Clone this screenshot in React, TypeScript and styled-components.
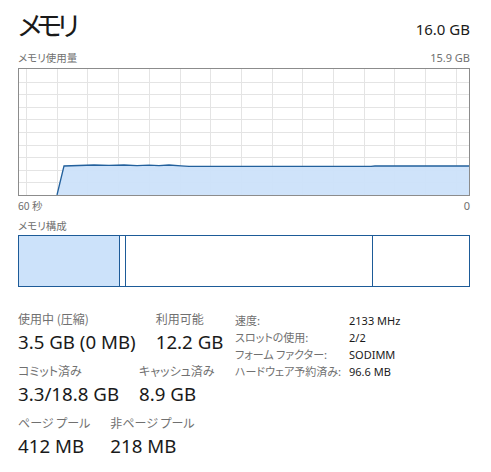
import React from 'react';
import styled, { createGlobalStyle } from 'styled-components';

const GlobalStyle = createGlobalStyle`
  html, body {
    margin: 0;
    padding: 0;
    background: #ffffff;
  }
  body {
    font-family: "Noto Sans", "Noto Sans CJK JP", sans-serif;
    color: #1a1a1a;
  }
`;

const Panel = styled.div`
  width: 491px;
  height: 472px;
  box-sizing: border-box;
  padding: 3px 21px 0 18px;
  overflow: hidden;
`;

const Header = styled.div`
  display: flex;
  justify-content: space-between;
  align-items: flex-end;
  height: 42px;
`;

const Title = styled.div`
  font-family: "Noto Sans CJK JP", sans-serif;
  font-feature-settings: "palt";
  font-size: 27px;
  letter-spacing: -5px;
  line-height: 40px;
`;

const Total = styled.div`
  font-size: 15px;
  line-height: 22px;
  margin-bottom: 5px;
`;

const CaptionRow = styled.div<{ $top?: number }>`
  display: flex;
  justify-content: space-between;
  align-items: center;
  height: 16px;
  margin-top: ${p => p.$top ?? 0}px;
  font-size: 11px;
  color: #707070;
`;

const Caption = styled.span`
  font-family: "Noto Sans CJK JP", sans-serif;
  font-feature-settings: "palt";
  font-size: 10.5px;
`;

const Graph = styled.div`
  width: 452px;
  height: 128px;
  box-sizing: border-box;
  border: 1px solid #8c8c8c;
  margin-top: 3px;
  svg { display: block; }
`;

const Composition = styled.div`
  display: flex;
  width: 452px;
  height: 52px;
  box-sizing: border-box;
  border: 1px solid #1d5b98;
  margin-top: 2px;
`;

const Segment = styled.div<{ $w: number; $fill?: boolean; $last?: boolean }>`
  width: ${p => p.$w}px;
  flex: ${p => (p.$last ? 1 : 'none')};
  background: ${p => (p.$fill ? '#cce2fa' : '#ffffff')};
  border-right: ${p => (p.$last ? 'none' : '1px solid #1d5b98')};
`;

const Stats = styled.div`
  display: flex;
  margin-top: 23px;
`;

const Left = styled.div`
  display: flex;
  flex-direction: column;
  width: 217px;
`;

const StatRow = styled.div`
  display: flex;
  gap: 20px;
  margin-bottom: 7px;
`;

const Stat = styled.div`
  display: flex;
  flex-direction: column;
`;

const StatLabel = styled.div`
  font-family: "Noto Sans CJK JP", sans-serif;
  font-feature-settings: "palt";
  font-size: 12px;
  line-height: 18px;
  color: #707070;
`;

const StatValue = styled.div`
  font-size: 18.7px;
  line-height: 26px;
  margin-top: 1px;
  color: #1a1a1a;
`;

const Details = styled.div`
  display: grid;
  grid-template-columns: 114px auto;
  grid-auto-rows: 17px;
  margin-top: 2px;
  font-size: 11px;
  line-height: 17px;
`;

const DetailLabel = styled.div`
  font-family: "Noto Sans CJK JP", sans-serif;
  font-feature-settings: "palt";
  color: #707070;
`;

const DetailValue = styled.div`
  color: #1a1a1a;
`;

const W = 450;
const H = 126;

const usage: [number, number][] = [
  [38, 126], [45, 97], [60, 96.5], [75, 96], [90, 96.4], [105, 96], [118, 96.6],
  [130, 96.2], [140, 96.6], [150, 96], [162, 96.8], [170, 97.4], [200, 97.4],
  [300, 97.4], [352, 97.4], [356, 97], [W, 97],
];

const UsageGraph: React.FC = () => {
  const vLines = Array.from({ length: 15 }, (_, i) => 7 + i * 30.7).filter(x => x < W);
  const hLines = Array.from({ length: 9 }, (_, i) => (i + 1) * 12.6);
  const line = usage.map(([x, y]) => `${x},${y}`).join(' ');
  const area = `${line} ${W},${H} 38,${H}`;
  return (
    <svg width={W} height={H} viewBox={`0 0 ${W} ${H}`}>
      {hLines.map(y => (
        <line key={`h${y}`} x1={0} x2={W} y1={Math.round(y) + 0.5} y2={Math.round(y) + 0.5} stroke="#e4e4e4" strokeWidth={1} />
      ))}
      {vLines.map(x => (
        <line key={`v${x}`} x1={Math.round(x) + 0.5} x2={Math.round(x) + 0.5} y1={0} y2={H} stroke="#e4e4e4" strokeWidth={1} />
      ))}
      <polygon points={area} fill="#cce2fa" fillOpacity={0.95} />
      <polyline points={line} fill="none" stroke="#22609c" strokeWidth={1.3} />
    </svg>
  );
};

const stats = [
  [
    { label: '使用中 (圧縮)', value: '3.5 GB (0 MB)' },
    { label: '利用可能', value: '12.2 GB' },
  ],
  [
    { label: 'コミット済み', value: '3.3/18.8 GB' },
    { label: 'キャッシュ済み', value: '8.9 GB' },
  ],
  [
    { label: 'ページ プール', value: '412 MB' },
    { label: '非ページ プール', value: '218 MB' },
  ],
];

const details = [
  ['速度:', '2133 MHz'],
  ['スロットの使用:', '2/2'],
  ['フォーム ファクター:', 'SODIMM'],
  ['ハードウェア予約済み:', '96.6 MB'],
];

const App: React.FC = () => {
  return (
    <>
      <GlobalStyle />
      <Panel>
        <Header>
          <Title>メモリ</Title>
          <Total>16.0 GB</Total>
        </Header>
        <CaptionRow $top={4}>
          <Caption>メモリ使用量</Caption>
          <span>15.9 GB</span>
        </CaptionRow>
        <Graph>
          <UsageGraph />
        </Graph>
        <CaptionRow $top={1}>
          <Caption>60 秒</Caption>
          <span>0</span>
        </CaptionRow>
        <CaptionRow $top={4}>
          <Caption>メモリ構成</Caption>
        </CaptionRow>
        <Composition>
          <Segment $w={100} $fill />
          <Segment $w={5} />
          <Segment $w={246} />
          <Segment $w={0} $last />
        </Composition>
        <Stats>
          <Left>
            {stats.map((row, i) => (
              <StatRow key={i}>
                {row.map(s => (
                  <Stat key={s.label}>
                    <StatLabel>{s.label}</StatLabel>
                    <StatValue>{s.value}</StatValue>
                  </Stat>
                ))}
              </StatRow>
            ))}
          </Left>
          <Details>
            {details.map(([k, v]) => (
              <React.Fragment key={k}>
                <DetailLabel>{k}</DetailLabel>
                <DetailValue>{v}</DetailValue>
              </React.Fragment>
            ))}
          </Details>
        </Stats>
      </Panel>
    </>
  );
};

export default App;
